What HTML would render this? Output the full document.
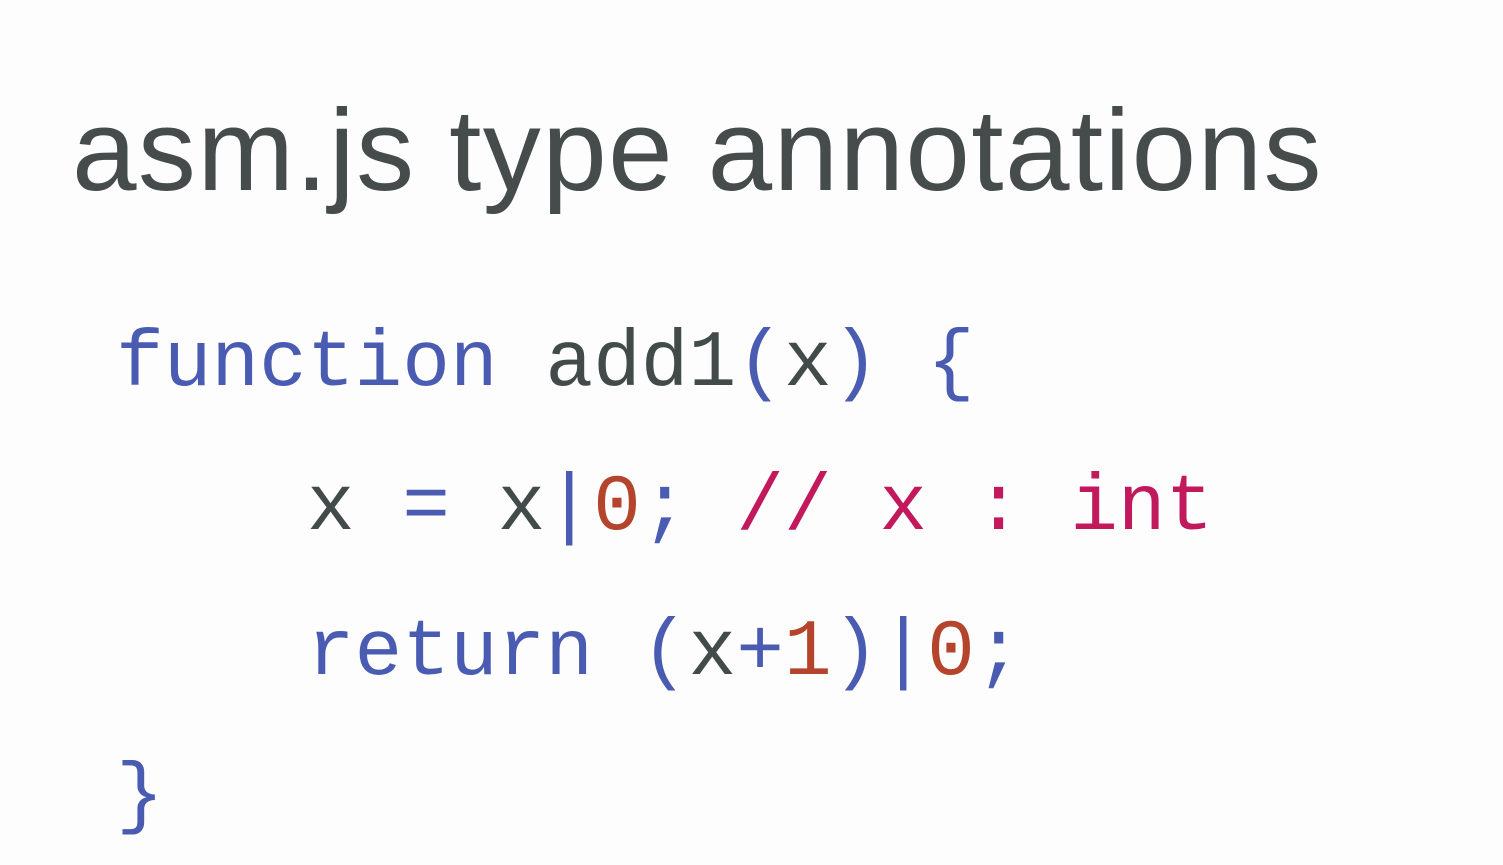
<!DOCTYPE html>
<html><head><meta charset="utf-8"><style>
html,body{margin:0;width:1503px;height:865px;background:#fdfdfd;overflow:hidden}
.t{position:absolute;left:72px;top:92px;font-family:"Liberation Sans",sans-serif;font-size:116px;color:#464b4b;letter-spacing:1.4px;line-height:1;white-space:nowrap}
.c{position:absolute;left:116px;font-family:"Liberation Mono",monospace;font-size:79.5px;line-height:1;white-space:pre;color:#424a4a}
.b{color:#4a5cb2}.r{color:#b4452c}.m{color:#c2195c}
</style></head><body>
<div class="t">asm.js type annotations</div>
<div class="c" style="top:325px"><span class="b">function</span> add1<span class="b">(</span>x<span class="b">)</span> <span class="b">{</span></div>
<div class="c" style="top:469px">    x <span class="b">=</span> x<span class="b">|</span><span class="r">0</span><span class="b">;</span> <span class="m">// x : int</span></div>
<div class="c" style="top:614px">    <span class="b">return</span> <span class="b">(</span>x<span class="b">+</span><span class="r">1</span><span class="b">)|</span><span class="r">0</span><span class="b">;</span></div>
<div class="c" style="top:758px"><span class="b">}</span></div>
</body></html>
